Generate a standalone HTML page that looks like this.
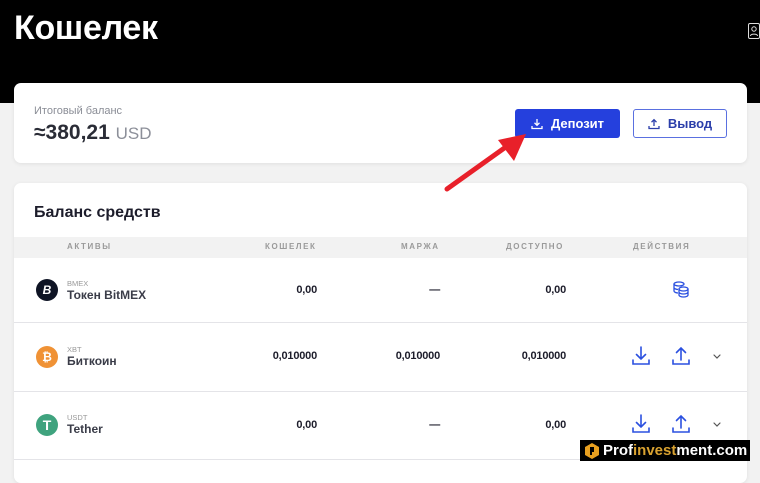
<!DOCTYPE html>
<html><head><meta charset="utf-8"><style>
*{margin:0;padding:0;box-sizing:border-box}
body{width:760px;height:469px;overflow:hidden;background:#f2f2f2;font-family:"Liberation Sans",sans-serif;position:relative;color:#1d1d2b}
.hdr{position:absolute;left:0;top:0;width:760px;height:103px;background:#000}
.hdr h1{position:absolute;left:14px;top:9px;color:#fff;font-size:34px;font-weight:bold;letter-spacing:-0.3px}
.card{position:absolute;background:#fff;border-radius:7px;box-shadow:0 1px 4px rgba(0,0,0,.08)}
.lbl{position:absolute;left:34px;top:105px;font-size:11px;color:#8a8d96}
.bal{position:absolute;left:34px;top:121px;font-size:21px;font-weight:bold;color:#2a2c36}
.bal span{font-size:17px;font-weight:normal;color:#8c8f99}
.btn{position:absolute;top:109px;height:29px;border-radius:3px;font-size:13px;font-weight:bold;display:flex;align-items:center;justify-content:center;gap:8px}
.th{position:absolute;top:237px;left:14px;width:733px;height:21px;background:#f2f2f2}
.th div{position:absolute;top:5px;font-size:8px;font-weight:bold;letter-spacing:1.6px;color:#9a9a9a}
.row{position:absolute;left:14px;width:733px;border-bottom:1px solid #e4e4e8}
.v{position:absolute;font-size:11px;color:#1d1d2b;text-align:right;font-weight:bold;letter-spacing:-0.2px}
.ic{position:absolute;left:36px;width:22px;height:22px;border-radius:50%;color:#fff;font-size:12px;font-weight:bold;display:flex;align-items:center;justify-content:center}
.tk{position:absolute;left:67px;font-size:7.5px;color:#9a9a9a}
.nm{position:absolute;left:67px;font-size:12px;font-weight:bold;color:#3a3c48}
</style></head><body>
<div class="hdr"><h1>Кошелек</h1>
<svg style="position:absolute;left:748px;top:23px" width="12" height="16" viewBox="0 0 12 16"><rect x="0.5" y="0.5" width="11" height="15" rx="1.5" fill="none" stroke="#ddd"/><circle cx="6" cy="6" r="2.2" fill="none" stroke="#ddd"/><path d="M2.5 13c0-2.5 7-2.5 7 0" fill="none" stroke="#ddd"/></svg>
</div>
<div class="card" style="left:14px;top:83px;width:733px;height:80px"></div>
<div class="lbl">Итоговый баланс</div>
<div class="bal">≈380,21 <span>USD</span></div>
<div class="btn" style="left:515px;width:105px;background:#2540dd;color:#fff">
<svg width="12" height="12" viewBox="0 0 12 12" fill="none" stroke="#fff" stroke-width="1.3"><path d="M6 1v6M3.5 4.8 6 7.3l2.5-2.5M1 8v2.5h10V8"/></svg>Депозит</div>
<div class="btn" style="left:633px;width:94px;background:#fff;border:1px solid #5a70e0;color:#2b3eaa">
<svg width="12" height="12" viewBox="0 0 12 12" fill="none" stroke="#2b3eaa" stroke-width="1.3"><path d="M6 8V1.8M3.5 4.2 6 1.7l2.5 2.5M1 8v2.5h10V8"/></svg>Вывод</div>
<div class="card" style="left:14px;top:183px;width:733px;height:300px"></div>
<svg style="position:absolute;left:440px;top:128px" width="100" height="70" viewBox="0 0 100 70"><path d="M7 61 70 16" stroke="#e8202a" stroke-width="5" stroke-linecap="round"/><path d="M86 6 58 12 74 33Z" fill="#e8202a"/></svg>
<div style="position:absolute;left:34px;top:204px;font-size:16px;font-weight:bold;color:#1d1d2b">Баланс средств</div>
<div class="th"><div style="left:53px">АКТИВЫ</div><div style="left:251px">КОШЕЛЕК</div><div style="left:387px">МАРЖА</div><div style="left:492px">ДОСТУПНО</div><div style="left:619px">ДЕЙСТВИЯ</div></div>
<div class="row" style="top:258px;height:65px"></div>
<div class="row" style="top:323px;height:69px"></div>
<div class="row" style="top:392px;height:68px"></div>
<div class="ic" style="top:279px;background:#0e1424;font-style:italic">B</div>
<div class="tk" style="top:279px">BMEX</div><div class="nm" style="top:288px">Токен BitMEX</div>
<div class="v" style="left:260px;width:57px;top:284px">0,00</div>
<div class="v" style="left:380px;width:60px;top:284px">—</div>
<div class="v" style="left:500px;width:66px;top:284px">0,00</div>
<svg style="position:absolute;left:672px;top:280px" width="18" height="18" viewBox="0 0 18 18" fill="none" stroke="#2b50e0" stroke-width="1.3"><ellipse cx="7" cy="4" rx="5" ry="2"/><path d="M2 4v7c0 1 2 2 4 2M2 7.5c0 1 2 2 4 2"/><ellipse cx="11.5" cy="9" rx="4.5" ry="2"/><path d="M7 9v6c0 1.1 2 2 4.5 2s4.5-.9 4.5-2V9M7 12c0 1.1 2 2 4.5 2s4.5-.9 4.5-2"/></svg>
<div class="ic" style="top:346px;background:#f09235">₿</div>
<div class="tk" style="top:345px">XBT</div><div class="nm" style="top:354px">Биткоин</div>
<div class="v" style="left:250px;width:67px;top:350px">0,010000</div>
<div class="v" style="left:370px;width:70px;top:350px">0,010000</div>
<div class="v" style="left:496px;width:70px;top:350px">0,010000</div>
<div class="ic" style="top:414px;background:#3fa37e;font-size:14px">T</div>
<div class="tk" style="top:413px">USDT</div><div class="nm" style="top:422px">Tether</div>
<div class="v" style="left:260px;width:57px;top:419px">0,00</div>
<div class="v" style="left:380px;width:60px;top:419px">—</div>
<div class="v" style="left:500px;width:66px;top:419px">0,00</div>
<svg style="position:absolute;left:632px;top:346px" width="90" height="90" viewBox="0 0 90 90" fill="none" stroke="#2b50e0" stroke-width="1.6" stroke-linecap="round">
<path d="M9 1v12M4.5 8.5 9 13l4.5-4.5M1 14v4h16v-4"/><path d="M49 14V2M44.5 6.5 49 2l4.5 4.5M41 14v4h16v-4"/><path d="M82 9l3 3 3-3" stroke="#555" stroke-width="1.2"/>
<g transform="translate(0,68)"><path d="M9 1v12M4.5 8.5 9 13l4.5-4.5M1 14v4h16v-4"/><path d="M49 14V2M44.5 6.5 49 2l4.5 4.5M41 14v4h16v-4"/><path d="M82 9l3 3 3-3" stroke="#555" stroke-width="1.2"/></g></svg>
<div style="position:absolute;left:580px;top:440px;width:170px;height:21px;background:#000;overflow:hidden">
<svg style="position:absolute;left:5px;top:3px" width="14" height="16" viewBox="0 0 14 16"><path d="M7 0 14 4v8l-7 4-7-4V4Z" fill="#e8a020"/><path d="M5 4h4v5H7v3H5Z" fill="#000"/></svg>
<div style="position:absolute;left:23px;top:2px;color:#fff;font-size:15px;font-weight:bold;white-space:nowrap">Prof<span style="color:#d9a230">invest</span>ment.com</div></div>
</body></html>
